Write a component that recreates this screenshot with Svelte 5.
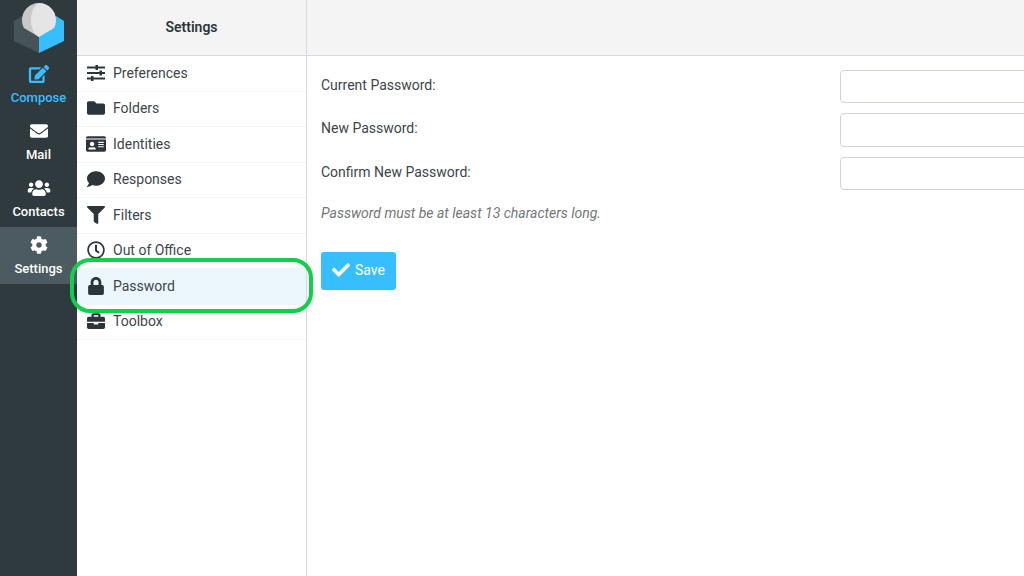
<script lang="ts">
  type Icon = { box: string; path: string }
  type Entry = { id: string; label: string; icon: Icon }

  const tasks: Entry[] = [
    {
      id: 'compose',
      label: 'Compose',
      icon: {
        box: '0 0 576 512',
        path: 'M402.6 83.2l90.2 90.2c3.8 3.8 3.8 10 0 13.8L274.4 405.6l-92.8 10.3c-12.4 1.4-22.9-9.1-21.5-21.5l10.3-92.8L388.8 83.2c3.8-3.8 10-3.8 13.8 0zm162-22.9l-48.8-48.8c-15.2-15.2-39.9-15.2-55.2 0l-35.4 35.4c-3.8 3.8-3.8 10 0 13.8l90.2 90.2c3.8 3.8 10 3.8 13.8 0l35.4-35.4c15.2-15.3 15.2-40 0-55.2zM384 346.2V448H64V128h229.8c3.2 0 6.2-1.3 8.5-3.5l40-40c7.6-7.6 2.2-20.5-8.5-20.5H48C21.5 64 0 85.5 0 112v352c0 26.5 21.5 48 48 48h352c26.5 0 48-21.5 48-48V306.2c0-10.7-12.9-16-20.5-8.5l-40 40c-2.2 2.3-3.5 5.3-3.5 8.5z'
      }
    },
    {
      id: 'mail',
      label: 'Mail',
      icon: {
        box: '0 0 512 512',
        path: 'M502.3 190.8c3.9-3.1 9.7-.2 9.7 4.7V400c0 26.5-21.5 48-48 48H48c-26.5 0-48-21.5-48-48V195.6c0-5 5.7-7.8 9.7-4.7 22.4 17.4 52.1 39.5 154.1 113.6 21.1 15.4 56.7 47.8 92.2 47.6 35.7.3 72-32.8 92.3-47.6 102-74.1 131.6-96.3 154-113.7zM256 320c23.2.4 56.6-29.2 73.4-41.4 132.7-96.3 142.8-104.7 173.4-128.7 5.8-4.5 9.2-11.5 9.2-18.9v-19c0-26.5-21.5-48-48-48H48c-26.5 0-48 21.5-48 48v19c0 7.4 3.4 14.3 9.2 18.9 30.6 23.9 40.7 32.4 173.4 128.7 16.8 12.2 50.2 41.8 73.4 41.4z'
      }
    },
    {
      id: 'contacts',
      label: 'Contacts',
      icon: {
        box: '0 0 640 512',
        path: 'M96 224c35.3 0 64-28.7 64-64s-28.7-64-64-64-64 28.7-64 64 28.7 64 64 64zm448 0c35.3 0 64-28.7 64-64s-28.7-64-64-64-64 28.7-64 64 28.7 64 64 64zm32 32h-64c-17.6 0-33.5 7.1-45.1 18.6 40.3 22.1 68.9 62 75.1 109.4h66c17.7 0 32-14.3 32-32v-32c0-35.3-28.7-64-64-64zm-256 0c61.9 0 112-50.1 112-112S381.9 32 320 32 208 82.1 208 144s50.1 112 112 112zm76.8 32h-8.3c-20.8 10-43.9 16-68.5 16s-47.6-6-68.5-16h-8.3C179.6 288 128 339.6 128 403.2V432c0 26.5 21.5 48 48 48h288c26.5 0 48-21.5 48-48v-28.8c0-63.6-51.6-115.2-115.2-115.2zm-223.7-13.4C161.5 263.1 145.6 256 128 256H64c-35.3 0-64 28.7-64 64v32c0 17.7 14.3 32 32 32h65.9c6.3-47.4 34.9-87.3 75.2-109.4z'
      }
    },
    {
      id: 'settings',
      label: 'Settings',
      icon: {
        box: '0 0 512 512',
        path: 'M487.4 315.7l-42.6-24.6c4.3-23.2 4.3-47 0-70.2l42.6-24.6c4.9-2.8 7.1-8.6 5.5-14-11.1-35.6-30-67.8-54.7-94.6-3.8-4.1-10-5.1-14.8-2.3L380.8 110c-17.9-15.4-38.5-27.3-60.8-35.1V25.8c0-5.6-3.9-10.5-9.4-11.7-36.7-8.2-74.3-7.8-109.2 0-5.5 1.2-9.4 6.1-9.4 11.7V75c-22.2 7.9-42.8 19.8-60.8 35.1L88.7 85.5c-4.9-2.8-11-1.9-14.8 2.3-24.7 26.7-43.6 58.9-54.7 94.6-1.7 5.4.6 11.2 5.5 14L67.3 221c-4.3 23.2-4.3 47 0 70.2l-42.6 24.6c-4.9 2.8-7.1 8.6-5.5 14 11.1 35.6 30 67.8 54.7 94.6 3.8 4.1 10 5.1 14.8 2.3l42.6-24.6c17.9 15.4 38.5 27.3 60.8 35.1v49.2c0 5.6 3.9 10.5 9.4 11.7 36.7 8.2 74.3 7.8 109.2 0 5.5-1.2 9.4-6.1 9.4-11.7v-49.2c22.2-7.9 42.8-19.8 60.8-35.1l42.6 24.6c4.9 2.8 11 1.9 14.8-2.3 24.7-26.7 43.6-58.9 54.7-94.6 1.5-5.5-.7-11.3-5.6-14.1zM256 336c-44.1 0-80-35.9-80-80s35.9-80 80-80 80 35.9 80 80-35.9 80-80 80z'
      }
    }
  ]

  const sections: Entry[] = [
    {
      id: 'preferences',
      label: 'Preferences',
      icon: {
        box: '0 0 18 18',
        path: 'M0 2.5h8.5V1H11v1.5h7v2h-7V6H8.5V4.5H0zM0 8h12.5V6.500H15V8h3v2h-3v1.500h-2.500V10H0zM0 13.500h4V12h2.500v1.500H18v2H6.500V17H4v-1.500H0z'
      }
    },
    {
      id: 'folders',
      label: 'Folders',
      icon: {
        box: '0 0 512 512',
        path: 'M464 128H272l-64-64H48C21.5 64 0 85.5 0 112v288c0 26.5 21.5 48 48 48h416c26.5 0 48-21.5 48-48V176c0-26.5-21.5-48-48-48z'
      }
    },
    {
      id: 'identities',
      label: 'Identities',
      icon: {
        box: '0 0 576 512',
        path: 'M528 32H48C21.5 32 0 53.5 0 80v16h576V80c0-26.5-21.5-48-48-48zM0 432c0 26.5 21.5 48 48 48h480c26.5 0 48-21.5 48-48V128H0v304zm352-232c0-4.4 3.6-8 8-8h144c4.4 0 8 3.6 8 8v16c0 4.4-3.6 8-8 8H360c-4.4 0-8-3.6-8-8v-16zm0 64c0-4.4 3.6-8 8-8h144c4.4 0 8 3.6 8 8v16c0 4.4-3.6 8-8 8H360c-4.4 0-8-3.6-8-8v-16zm0 64c0-4.4 3.6-8 8-8h144c4.4 0 8 3.6 8 8v16c0 4.4-3.6 8-8 8H360c-4.4 0-8-3.6-8-8v-16zM176 192c35.3 0 64 28.7 64 64s-28.7 64-64 64-64-28.7-64-64 28.7-64 64-64zM67.1 396.2C75.5 370.5 99.6 352 128 352h8.2c12.3 5.1 25.7 8 39.8 8s27.6-2.9 39.8-8h8.2c28.4 0 52.5 18.5 60.9 44.2 3.2 9.9-5.2 19.8-15.6 19.8H82.7c-10.4 0-18.8-10-15.6-19.8z'
      }
    },
    {
      id: 'responses',
      label: 'Responses',
      icon: {
        box: '0 0 512 512',
        path: 'M256 32C114.6 32 0 125.1 0 240c0 49.6 21.4 95 57 130.7C44.5 421.1 2.7 466 2.2 466.5c-2.2 2.3-2.8 5.7-1.5 8.7S4.8 480 8 480c66.3 0 116-31.8 140.6-51.4 32.7 12.3 69 19.4 107.4 19.4 141.4 0 256-93.1 256-208S397.4 32 256 32z'
      }
    },
    {
      id: 'filters',
      label: 'Filters',
      icon: {
        box: '0 0 512 512',
        path: 'M488 0H24C2.7 0-8 25.9 7.1 41L192 225.9V432c0 7.8 3.8 15.2 10.2 19.7l80 56C298 518.7 320 507.5 320 488V225.9L504.9 41C520 25.9 509.3 0 488 0z'
      }
    },
    {
      id: 'vacation',
      label: 'Out of Office',
      icon: {
        box: '0 0 512 512',
        path: 'M256 8C119 8 8 119 8 256s111 248 248 248 248-111 248-248S393 8 256 8zm0 448c-110.5 0-200-89.5-200-200S145.5 56 256 56s200 89.5 200 200-89.5 200-200 200zm61.8-104.4l-84.9-61.7c-3.1-2.3-4.9-5.9-4.9-9.7V116c0-6.6 5.4-12 12-12h32c6.6 0 12 5.4 12 12v141.7l66.8 48.6c5.4 3.9 6.5 11.4 2.6 16.8L334.6 349c-3.9 5.3-11.4 6.5-16.8 2.6z'
      }
    },
    {
      id: 'password',
      label: 'Password',
      icon: {
        box: '0 0 448 512',
        path: 'M400 224h-24v-72C376 68.2 307.8 0 224 0S72 68.2 72 152v72H48c-26.5 0-48 21.5-48 48v192c0 26.5 21.5 48 48 48h352c26.5 0 48-21.5 48-48V272c0-26.5-21.5-48-48-48zm-104 0H152v-72c0-39.7 32.3-72 72-72s72 32.3 72 72v72z'
      }
    },
    {
      id: 'toolbox',
      label: 'Toolbox',
      icon: {
        box: '0 0 512 512',
        path: 'M320 336c0 8.8-7.2 16-16 16h-96c-8.8 0-16-7.2-16-16v-24H0v120c0 25.6 22.4 48 48 48h416c25.6 0 48-22.4 48-48V312H320v24zM464 136h-80V80c0-25.6-22.4-48-48-48H176c-25.6 0-48 22.4-48 48v56H48c-25.6 0-48 22.4-48 48v92h512v-92c0-25.6-22.4-48-48-48zm-144 0H192V92h128v44z'
      }
    }
  ]

  const fields = [
    { id: 'curpasswd', label: 'Current Password:' },
    { id: 'newpasswd', label: 'New Password:' },
    { id: 'confpasswd', label: 'Confirm New Password:' }
  ]

  let activeTask = $state('settings')
  let activeSection = $state('password')
</script>

{#snippet glyph(icon: Icon)}
  <svg viewBox={icon.box} aria-hidden="true"><path d={icon.path} /></svg>
{/snippet}

<div class="layout">
  <nav class="taskbar" aria-label="Tasks">
    <svg class="logo" viewBox="0 0 52 52" aria-hidden="true">
      <path fill="#465358" d="M1 20l8-5 17 18v19L1 40z" />
      <path fill="#37beff" d="M51 20l-8-5-17 18v19l25-12z" />
      <path fill="#c9c9c9" d="M26 2C16 2 9 10 9 19c0 4 1 6 2 8l15 9z" />
      <path fill="#e5e5e5" d="M26 2c10 0 17 8 17 17 0 4-1 6-2 8l-15 9c-5-3-8-9-8-17S21 4 26 2z" />
    </svg>
    {#each tasks as task (task.id)}
      <button
        class="task"
        class:compose={task.id === 'compose'}
        class:active={task.id === activeTask}
        onclick={() => (activeTask = task.id)}
      >
        {@render glyph(task.icon)}
        <span>{task.label}</span>
      </button>
    {/each}
  </nav>

  <aside class="sidebar">
    <header><h1>Settings</h1></header>
    <ul>
      {#each sections as section (section.id)}
        <li class:selected={section.id === activeSection}>
          <a href="#{section.id}" onclick={() => (activeSection = section.id)}>
            {@render glyph(section.icon)}
            <span>{section.label}</span>
          </a>
        </li>
      {/each}
    </ul>
  </aside>

  <main>
    <header></header>
    <form onsubmit={(e) => e.preventDefault()}>
      <div class="fields">
        {#each fields as field (field.id)}
          <label for={field.id}>{field.label}</label>
          <input id={field.id} type="password" />
        {/each}
      </div>
      <p class="hint">Password must be at least 13 characters long.</p>
      <button class="save" type="submit">
        <svg viewBox="0 0 512 512" aria-hidden="true">
          <path d="M173.9 439.4L7.5 273c-10-10-10-26.2 0-36.2l36.2-36.2c10-10 26.2-10 36.2 0L192 312.7 432.1 72.6c10-10 26.2-10 36.2 0l36.2 36.2c10 10 10 26.2 0 36.2L210.1 439.4c-10 10-26.2 10-36.2 0z" />
        </svg>
        Save
      </button>
    </form>
  </main>
</div>

<style>
  :global(body) {
    margin: 0;
  }

  .layout {
    display: flex;
    min-height: 100vh;
    overflow: hidden;
    background: #fff;
    color: #2c363a;
    font-family: Roboto, 'Liberation Sans', sans-serif;
    font-size: 14px;
  }

  svg {
    fill: currentColor;
  }

  button {
    border: 0;
    font-family: inherit;
    cursor: pointer;
  }

  header {
    display: flex;
    align-items: center;
    justify-content: center;
    box-sizing: border-box;
    height: 56px;
    border-bottom: 1px solid #d4dbde;
    background: #f4f4f4;
  }

  h1 {
    margin: 0;
    padding-bottom: 2px;
    font-size: 14px;
    font-weight: 600;
  }

  .taskbar {
    display: flex;
    flex: none;
    flex-direction: column;
    width: 77px;
    background: #2f3a3f;
  }

  .logo {
    width: 52px;
    height: 52px;
    margin: 1px auto 3px;
  }

  .task {
    display: flex;
    flex-direction: column;
    align-items: center;
    gap: 7px;
    height: 57px;
    padding: 9px 0 0;
    background: none;
    color: #fff;
    font-size: 13px;
    font-weight: 500;
    line-height: 16px;
  }

  .task svg {
    width: 24px;
    height: 18px;
  }

  .task.compose {
    color: #37beff;
  }

  .task.active {
    background: #4b5b61;
  }

  .sidebar {
    flex: none;
    width: 229px;
    border-right: 1px solid #d4dbde;
  }

  ul {
    display: grid;
    grid-auto-rows: 1fr;
    min-height: 284px;
    margin: 0;
    padding: 0;
    list-style: none;
  }

  li {
    position: relative;
    border-bottom: 1px solid #f1f3f4;
  }

  li a {
    display: flex;
    align-items: center;
    gap: 7px;
    box-sizing: border-box;
    height: 100%;
    padding: 0 0 1px 9px;
    color: inherit;
    text-decoration: none;
  }

  li span,
  label {
    color: #3c464a;
  }

  li svg {
    width: 20px;
    height: 18px;
  }

  .selected {
    background: #ebf7fd;
  }

  .selected::after {
    position: absolute;
    inset: -11px -7px -9px;
    border: 4px solid #12cf4b;
    border-radius: 20px;
    content: '';
    pointer-events: none;
  }

  main {
    flex: 1;
    min-width: 0;
  }

  form {
    padding: 14px 0 0 14px;
  }

  /* the inputs run on past the right edge of the pane */
  .fields {
    display: grid;
    grid-template-columns: 519px 1fr;
    grid-auto-rows: 1fr;
    gap: 10px 0;
    min-height: 120px;
    margin-right: -8px;
  }

  label {
    padding-top: 7px;
    line-height: 16px;
  }

  input {
    box-sizing: border-box;
    min-width: 0;
    width: 100%;
    border: 1px solid #ced4da;
    border-radius: 4px;
    font: inherit;
  }

  .hint {
    margin: 15px 0 31px;
    color: #737677;
    font-style: italic;
    line-height: 16px;
  }

  .save {
    display: flex;
    align-items: center;
    gap: 5px;
    height: 38px;
    padding: 0 11px 2px;
    border-radius: 3px;
    background: #37beff;
    color: #fff;
    font-size: 14px;
    font-weight: 400;
  }

  .save svg {
    width: 18px;
    height: 18px;
  }
</style>
